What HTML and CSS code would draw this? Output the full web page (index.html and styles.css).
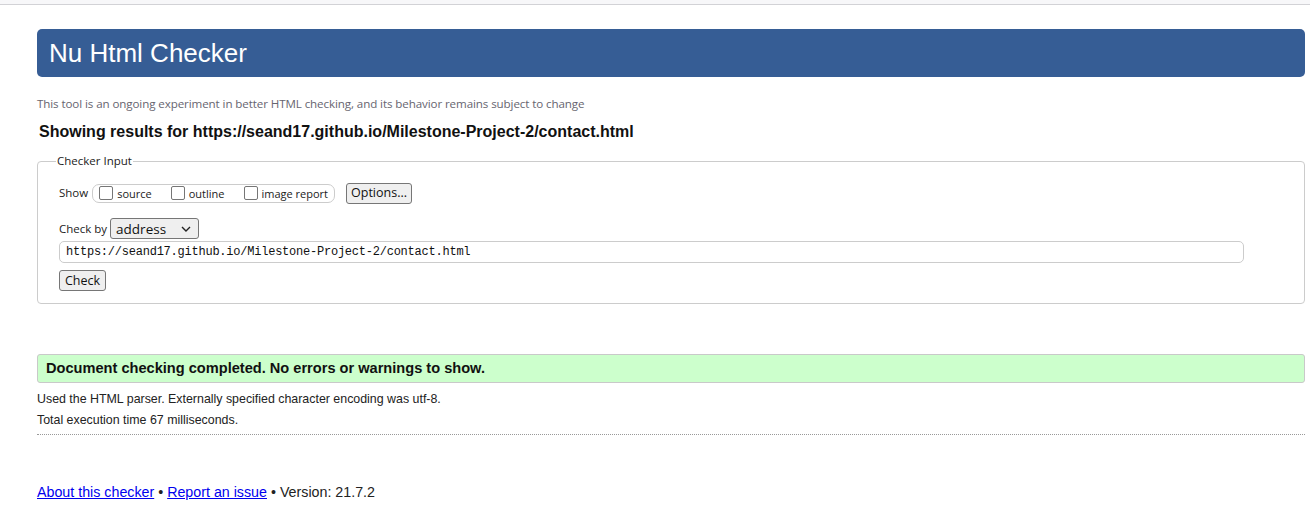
FILE: index.html
```html
<!DOCTYPE html>
<html lang="en">
<head>
<meta charset="utf-8">
<title>Showing results for contact.html - Nu Html Checker</title>
<link rel="stylesheet" href="styles.css">
</head>
<body>
<div class="chrome"></div>
<div class="page">
  <h1 class="banner">Nu Html Checker</h1>
  <p class="tagline">This tool is an ongoing experiment in better HTML checking, and its behavior remains subject to change</p>
  <h2 class="results-for">Showing results for https://seand17.github.io/Milestone-Project-2/contact.html</h2>
  <fieldset class="checker">
    <legend class="legend">Checker Input</legend>
    <div class="row show-row">
      <span class="label">Show</span>
      <span class="pill">
        <label class="opt"><span class="box"></span>source</label>
        <label class="opt"><span class="box"></span>outline</label>
        <label class="opt"><span class="box"></span>image report</label>
      </span>
      <span class="btn options">Options...</span>
    </div>
    <div class="row by-row">
      <span class="label">Check by</span>
      <span class="select">address<svg class="chev" width="10" height="6" viewBox="0 0 10 6"><path d="M1 1l4 4 4-4" fill="none" stroke="#222" stroke-width="1.4"/></svg></span>
    </div>
    <div class="url">https://seand17.github.io/Milestone-Project-2/contact.html</div>
    <div class="row"><span class="btn check">Check</span></div>
  </fieldset>
  <div class="success">Document checking completed. No errors or warnings to show.</div>
  <p class="details">Used the HTML parser. Externally specified character encoding was utf-8.</p>
  <p class="details">Total execution time 67 milliseconds.</p>
  <hr class="dotted">
  <p class="footer"><a href="#">About this checker</a> • <a href="#">Report an issue</a> • Version: 21.7.2</p>
</div>
</body>
</html>
```
FILE: styles.css
```css
html, body { margin: 0; padding: 0; background: #fff; }
body { font-family: "Liberation Sans", Arial, sans-serif; color: #222; }
.chrome { height: 4px; background: #f7f7f9; border-bottom: 1px solid #d2d2d6; }
.page { margin-left: 37px; width: 1268px; padding-top: 24px; }
.banner {
  margin: 0; height: 48px; box-sizing: border-box; padding-left: 12px;
  background: #365d95; color: #fff; border-radius: 5px;
  font: 400 26px/48px "Liberation Sans", Arial, sans-serif;
}
.tagline { margin: 20px 0 0; font: 11.6px/14px "Open Sans", sans-serif; color: #676570; letter-spacing: -0.1px; }
.results-for { margin: 11px 0 0 2px; font: 700 16px/20px "Liberation Sans", Arial, sans-serif; color: #111; }
.checker {
  margin: 12px 0 0; padding: 10px 21px 12px; border: 1px solid #ccc; border-radius: 4px;
  min-width: 0;
}
.legend { padding: 0 1px; margin-left: -3px; font: 11.5px/14px "Open Sans", sans-serif; color: #222; }
.row { display: flex; align-items: center; }
.label { font: 11.5px/14px "Open Sans", sans-serif; color: #222; }
.show-row { margin-top: 4px; height: 22px; }
.pill {
  display: flex; align-items: center; margin-left: 4px; height: 17px; padding: 0 6px 0 6px;
  border: 1px solid #ccc; border-radius: 7px; gap: 19px;
}
.opt { display: flex; align-items: center; font: 11px/13px "Open Sans", sans-serif; color: #222; }
.box { width: 12px; height: 12px; border: 1px solid #767676; border-radius: 2px; margin-right: 4px; background: #fff; }
.btn {
  display: inline-flex; align-items: center; box-sizing: border-box; padding: 0 4px;
  border: 1px solid #767676; border-radius: 3px; background: #efefef;
  font: 12.5px/14px "Open Sans", sans-serif; color: #111;
}
.options { margin-left: 11px; height: 21px; }
.by-row { margin-top: 14px; height: 21px; }
.select {
  display: inline-flex; align-items: center; justify-content: space-between; box-sizing: border-box;
  margin-left: 3px; width: 89px; height: 21px; padding: 0 7px 0 5px;
  border: 1px solid #767676; border-radius: 3px; background: #efefef;
  font: 13.5px/16px "Open Sans", sans-serif; color: #111;
}
.url {
  margin-top: 2px; width: 1185px; height: 22px; box-sizing: border-box; padding-left: 6px;
  border: 1px solid #ccc; border-radius: 5px;
  font: 12px/20px "Liberation Mono", monospace; color: #111; letter-spacing: -0.23px;
}
.check { margin-top: 7px; height: 21px; padding: 0 5px; }
.success {
  margin-top: 50px; height: 29px; box-sizing: border-box; padding-left: 8px;
  background: #ccffcc; border: 1px solid #c9c9c9; border-radius: 3px;
  font: 700 14.6px/27px "Liberation Sans", Arial, sans-serif; color: #111;
}
.details { margin: 9px 0 0; font: 12.4px/14px "Liberation Sans", Arial, sans-serif; color: #222; }
.details + .details { margin-top: 7px; }
.dotted { margin: 7px 0 0; border: 0; border-top: 1px dotted #999; height: 0; }
.footer { margin: 49px 0 0; font: 14.25px/16px "Liberation Sans", Arial, sans-serif; color: #222; }
.footer a { color: #0000ee; }
```
